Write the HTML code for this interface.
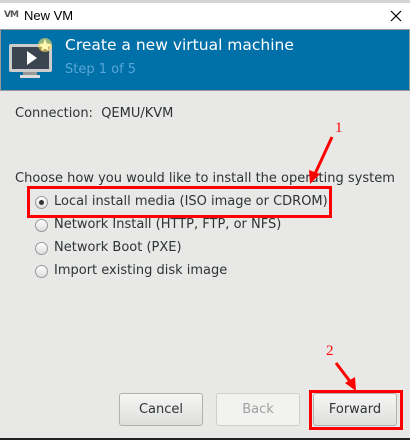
<!DOCTYPE html>
<html><head><style>
body{margin:0;width:410px;height:440px;background:#e8e8e7;font-family:"DejaVu Sans","Liberation Sans",sans-serif;position:relative;overflow:hidden;color:#2e3436}
.a{position:absolute}
.t{font-size:13px;white-space:nowrap}
.r{width:13px;height:13px;border:1px solid #999;border-radius:50%;background:linear-gradient(#fff,#ddd);box-sizing:border-box}
.btn{position:absolute;top:393px;width:84px;height:33px;border:1px solid #b0b0ae;border-radius:3px;background:linear-gradient(#f6f6f5,#dededc);box-sizing:border-box;font-size:13px;text-align:center;line-height:31px}
</style></head><body>
<div class="a" style="left:0;top:0;width:410px;height:3px;background:#d4d4d4"></div>
<div class="a" style="left:0;top:3px;width:410px;height:26px;background:#fff"></div>
<div class="a t" style="left:4px;top:10px;font-size:9px;font-weight:bold;color:#555;letter-spacing:-1px">VM</div>
<div class="a t" style="left:24px;top:8px;font-family:'Liberation Sans',sans-serif;font-size:13px;color:#000">New VM</div>
<svg class="a" style="left:390px;top:10px" width="12" height="12"><path d="M1 1L11 11M11 1L1 11" stroke="#000" stroke-width="1.2"/></svg>
<div class="a" style="left:0;top:29px;width:410px;height:62px;background:#0070a8;border:1px solid #999;box-sizing:border-box"></div>
<svg class="a" style="left:8px;top:36px" width="48" height="44">
<rect x="1" y="8" width="43" height="28" rx="2" fill="#ccc"/>
<rect x="4" y="11" width="37" height="22" fill="#3a4550"/>
<path d="M19 15L19 29L29 22Z" fill="#fff"/>
<rect x="15" y="36" width="14" height="3" fill="#999"/>
<rect x="12" y="39" width="20" height="3" fill="#ddd"/>
<circle cx="37" cy="9" r="7" fill="#ffe060" opacity=".6"/>
<path d="M37 3L38.8 7.5L43 8L39.8 11L40.8 15L37 12.8L33.2 15L34.2 11L31 8L35.2 7.5Z" fill="#fff8b0"/>
</svg>
<div class="a t" style="left:65px;top:36px;font-size:15.5px;color:#fff">Create a new virtual machine</div>
<div class="a t" style="left:65px;top:62px;color:#58a6d8">Step 1 of 5</div>
<div class="a t" style="left:15px;top:106px">Connection:&nbsp; QEMU/KVM</div>
<div class="a t" style="left:15px;top:171px">Choose how you would like to install the operating system</div>
<div class="a r" style="left:35px;top:196px"><div style="width:5px;height:5px;border-radius:50%;background:#333;margin:3px"></div></div>
<div class="a t" style="left:54px;top:194px">Local install media (ISO image or CDROM)</div>
<div class="a r" style="left:35px;top:219px"></div>
<div class="a t" style="left:54px;top:217px">Network Install (HTTP, FTP, or NFS)</div>
<div class="a r" style="left:35px;top:242px"></div>
<div class="a t" style="left:54px;top:240px">Network Boot (PXE)</div>
<div class="a r" style="left:35px;top:265px"></div>
<div class="a t" style="left:54px;top:263px">Import existing disk image</div>
<div class="a" style="left:27px;top:186px;width:305px;height:32px;border:3px solid #f00;box-sizing:border-box"></div>
<div class="a t" style="left:335px;top:120px;font-family:'Liberation Serif',serif;font-size:15px;color:#f00">1</div>
<svg class="a" style="left:0;top:0" width="410" height="440">
<path d="M332 137L314 176" stroke="#f00" stroke-width="3"/><path d="M310 184L309 170L320 174Z" fill="#f00"/>
<path d="M336 363L352 384" stroke="#f00" stroke-width="3"/><path d="M356 391L345 383L355 377Z" fill="#f00"/>
</svg>
<div class="a t" style="left:326px;top:343px;font-family:'Liberation Serif',serif;font-size:15px;color:#f00">2</div>
<div class="btn" style="left:119px">Cancel</div>
<div class="btn" style="left:216px;background:#f2f2f1;border-color:#cfcfcd;color:#a0a0a0">Back</div>
<div class="btn" style="left:313px">Forward</div>
<div class="a" style="left:309px;top:390px;width:94px;height:40px;border:3px solid #f00;box-sizing:border-box"></div>
<div class="a" style="left:0;top:438px;width:410px;height:2px;background:#222"></div>
</body></html>
